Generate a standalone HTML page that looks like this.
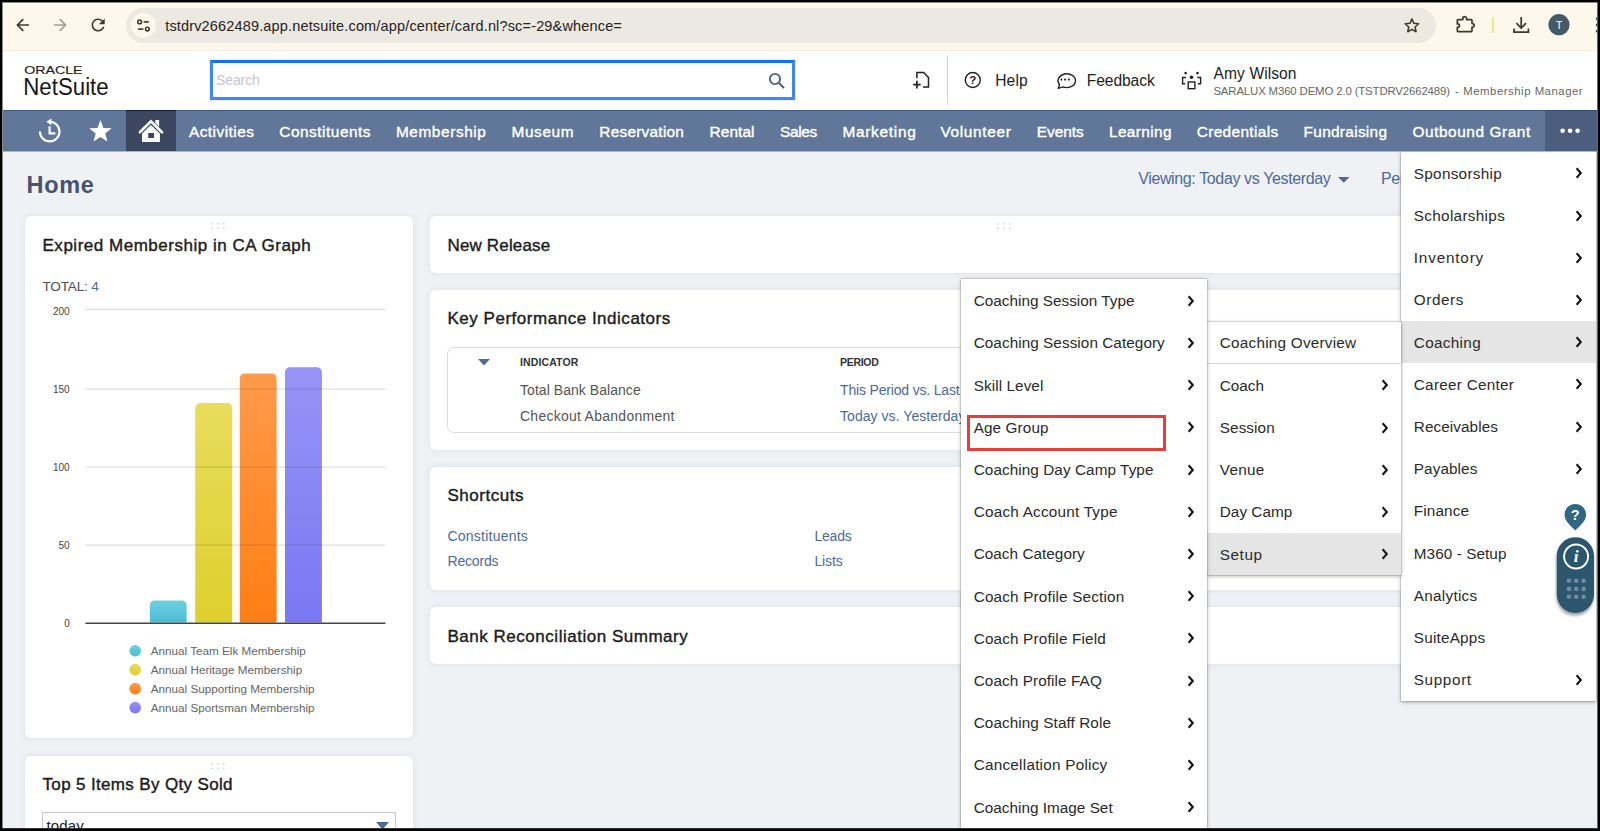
<!DOCTYPE html>
<html lang="en">
<head>
<meta charset="utf-8">
<title>Home - NetSuite</title>
<style>
*{box-sizing:border-box;margin:0;padding:0}
html,body{width:1600px;height:831px;overflow:hidden;background:#000}
#frame{position:absolute;left:2px;top:2px;width:1596px;height:827px;background:#8d8b86;border-bottom:1px solid #333;border-right:1px solid #666}
body{font-family:"Liberation Sans",sans-serif;color:#222;position:relative}
#win{position:absolute;left:3px;top:3px;width:1594px;height:825px;background:#eff1f5;overflow:hidden}
.abs{position:absolute}
.t{position:absolute;white-space:nowrap;line-height:20px}
/* browser chrome */
#chrome{position:absolute;left:0;top:0;width:1594px;height:48px;background:#fdf8ec;border-bottom:1px solid #f2eee3}
#pill{position:absolute;left:123.200px;top:4.600px;width:1310px;height:35px;border-radius:17.500px;background:#ece9e2}
#tune{position:absolute;left:4.600px;top:5px;width:25px;height:25px;border-radius:12.500px;background:#fdf8ec}
#url{left:162.2px;top:12.5px;font-size:14.5px;color:#26221b;letter-spacing:0.16px}
/* header */
#hdr{position:absolute;left:0;top:48px;width:1594px;height:59px;background:#fff}
#search{position:absolute;left:206.500px;top:9px;width:585.600px;height:40px;border:3px solid #3f87f7;border-top-color:#1271fc;box-shadow:0 0 1px 0 rgba(63,135,247,0.600);background:#fff}
/* nav */
#nav{position:absolute;left:0;top:107px;width:1594px;height:42px;border-bottom:1px solid #aab6c9;box-shadow:inset 0 1px 0 #3f5b88;background:#607799}
#homebtn{position:absolute;left:123px;top:0;width:50px;height:41px;background:#3a475e;border-top:1px solid #141a3a}
#morebtn{position:absolute;left:1542px;top:0;width:52px;height:41px;background:#4c5e7e;border-top:1px solid #2f4a75}
.nv{position:absolute;top:11px;line-height:22px;font-size:15.4px;font-weight:normal;-webkit-text-stroke:0.4px #fff;color:#fff;white-space:nowrap;letter-spacing:0.5px}
/* cards */
.card{position:absolute;background:#fff;border-radius:6px;box-shadow:0 0 7px rgba(40,50,70,0.090)}
.ct{position:absolute;white-space:nowrap;font-size:17px;font-weight:normal;-webkit-text-stroke:0.4px #1c1c1c;color:#1c1c1c;line-height:22px;letter-spacing:0.52px}
.lnk{color:#4b6a9e}
/* menus */
.menu{position:absolute;background:#fff;box-shadow:0 0 0 0.600px rgba(0,0,0,0.160),0 1px 4px rgba(0,0,0,0.330)}
.mi{position:absolute;left:0;width:100%;height:42px}
.mi span{position:absolute;left:12.500px;top:10.800px;line-height:22px;font-size:15.3px;color:#2a2a2a;white-space:nowrap;letter-spacing:0.1px}
.mi svg{position:absolute;right:12.400px;top:15.400px}
.hl{background:#e5e5e5}
</style>
</head>
<body>
<div id="frame"></div>
<div id="win">

<!-- page content placeholder -->
<div id="page">
  <div class="t" style="left:23.600px;top:168px;font-size:23.5px;line-height:28px;font-weight:bold;color:#44546f;letter-spacing:0.65px">Home</div>
  <div class="t lnk" style="left:1135.200px;top:164.600px;font-size:16px;line-height:22px;letter-spacing:-0.370px">Viewing: Today vs Yesterday</div>
  <svg class="abs" style="left:1335.200px;top:173.500px" width="12" height="6" viewBox="0 0 12 6"><path d="M0 0h11.600L5.800 5.800z" fill="#4b6a9e"/></svg>
  <div class="t lnk" style="left:1378px;top:164.600px;font-size:16px;line-height:22px;letter-spacing:-0.370px">Personalize</div>

  <!-- left column card 1 -->
  <div class="card" style="left:22px;top:213px;width:388px;height:522px">
    <svg class="abs" style="left:186px;top:7px" width="16" height="7" viewBox="0 0 16 7" fill="#d3d6db"><rect x="0" y="0" width="1.6" height="1.6"/><rect x="6" y="0" width="1.6" height="1.6"/><rect x="12" y="0" width="1.6" height="1.6"/><rect x="0" y="4.5" width="1.6" height="1.6"/><rect x="6" y="4.5" width="1.6" height="1.6"/><rect x="12" y="4.5" width="1.6" height="1.6"/></svg>
    <div class="ct" style="left:17.5px;top:18.600px">Expired Membership in CA Graph</div>
    <div class="t" style="left:17.5px;top:60.500px;font-size:13.600px;color:#505050;letter-spacing:-0.2px">TOTAL: <span class="lnk">4</span></div>
    <svg class="abs" style="left:0;top:0" width="388" height="522" viewBox="0 0 388 522" font-family="Liberation Sans, sans-serif">
      <defs>
        <linearGradient id="g1" x1="0" y1="0" x2="0" y2="1"><stop offset="0" stop-color="#6fd0e0"/><stop offset="1" stop-color="#49bdd4"/></linearGradient>
        <linearGradient id="g2" x1="0" y1="0" x2="0" y2="1"><stop offset="0" stop-color="#e8dc5c"/><stop offset="1" stop-color="#ddd02d"/></linearGradient>
        <linearGradient id="g3" x1="0" y1="0" x2="0" y2="1"><stop offset="0" stop-color="#ff9a4a"/><stop offset="1" stop-color="#fd7e14"/></linearGradient>
        <linearGradient id="g4" x1="0" y1="0" x2="0" y2="1"><stop offset="0" stop-color="#9694f6"/><stop offset="1" stop-color="#7a77f3"/></linearGradient>
      </defs>
      <g fill="#444" font-size="10" text-anchor="end">
        <text x="44.700" y="99">200</text><text x="44.700" y="177">150</text><text x="44.700" y="255">100</text><text x="44.700" y="333">50</text><text x="44.700" y="410.900">0</text>
      </g>
      <path d="M124.800 406.600V389.400a5 5 0 0 1 5-5h26.800a5 5 0 0 1 5 5V406.600z" fill="url(#g1)"/>
      <path d="M170.200 406.600V192.100a5 5 0 0 1 5-5h27a5 5 0 0 1 5 5V406.600z" fill="url(#g2)"/>
      <path d="M214.800 406.600V162.400a5 5 0 0 1 5-5h26.800a5 5 0 0 1 5 5V406.600z" fill="url(#g3)"/>
      <path d="M260 406.600V156.250a5 5 0 0 1 5-5h26.900a5 5 0 0 1 5 5V406.600z" fill="url(#g4)"/>
      <g stroke="rgba(40,60,40,0.160)" stroke-width="1.300">
        <path d="M60.400 93.400H360.400M60.400 173.150H360.400M60.400 251.200H360.400M60.400 329.200H360.400"/>
      </g>
      <path d="M60.400 407.250H360.400" stroke="#444" stroke-width="1.500"/>
      <circle cx="110.200" cy="434.750" r="5.800" fill="url(#g1)"/><circle cx="110.200" cy="453.600" r="5.800" fill="url(#g2)"/><circle cx="110.200" cy="472.600" r="5.800" fill="url(#g3)"/><circle cx="110.200" cy="491.600" r="5.800" fill="url(#g4)"/>
      <g fill="#666" font-size="11.700">
        <text x="125.800" y="439" >Annual Team Elk Membership</text><text x="125.800" y="458">Annual Heritage Membership</text><text x="125.800" y="476.800">Annual Supporting Membership</text><text x="125.800" y="495.800">Annual Sportsman Membership</text>
      </g>
    </svg>
  </div>

  <!-- left column card 2 -->
  <div class="card" style="left:22px;top:753px;width:388px;height:120px">
    <svg class="abs" style="left:186px;top:7px" width="16" height="7" viewBox="0 0 16 7" fill="#d3d6db"><rect x="0" y="0" width="1.6" height="1.6"/><rect x="6" y="0" width="1.6" height="1.6"/><rect x="12" y="0" width="1.6" height="1.6"/><rect x="0" y="4.5" width="1.6" height="1.6"/><rect x="6" y="4.5" width="1.6" height="1.6"/><rect x="12" y="4.5" width="1.6" height="1.6"/></svg>
    <div class="ct" style="left:17.5px;top:17.600px;letter-spacing:0.350px">Top 5 Items By Qty Sold</div>
    <div class="abs" style="left:17px;top:56px;width:354.400px;height:30px;border:1px solid #c9c9c9;background:#fff"></div>
    <div class="t" style="left:21.600px;top:59.600px;font-size:15px;color:#222;letter-spacing:0.100px">today</div>
    <svg class="abs" style="left:351.200px;top:66px" width="13" height="8" viewBox="0 0 13 8"><path d="M0 0h13L6.500 7.600z" fill="#4b6a9e"/></svg>
  </div>

  <!-- middle column -->
  <div class="card" style="left:427px;top:213px;width:1150px;height:57px">
    <svg class="abs" style="left:567px;top:7px" width="16" height="7" viewBox="0 0 16 7" fill="#d3d6db"><rect x="0" y="0" width="1.6" height="1.6"/><rect x="6" y="0" width="1.6" height="1.6"/><rect x="12" y="0" width="1.6" height="1.6"/><rect x="0" y="4.5" width="1.6" height="1.6"/><rect x="6" y="4.5" width="1.6" height="1.6"/><rect x="12" y="4.5" width="1.6" height="1.6"/></svg>
    <div class="ct" style="left:17.5px;top:18.600px;letter-spacing:0.160px">New Release</div>
  </div>
  <div class="card" style="left:427px;top:287px;width:1150px;height:160px">
    <div class="ct" style="left:17.5px;top:17.600px">Key Performance Indicators</div>
    <div class="abs" style="left:17px;top:56.500px;width:1116px;height:86.500px;border:1px solid #dcdcdc;border-radius:7px"></div>
    <svg class="abs" style="left:48px;top:69px" width="12" height="7" viewBox="0 0 12 7"><path d="M0 0h12L6 6.6z" fill="#4b6a9e"/></svg>
    <div class="t" style="left:90px;top:62px;font-size:10.5px;font-weight:bold;color:#333;letter-spacing:0.11px">INDICATOR</div>
    <div class="t" style="left:410px;top:62px;font-size:10.5px;font-weight:bold;color:#333;letter-spacing:-0.3px">PERIOD</div>
    <div class="t" style="left:90px;top:90.300px;font-size:14px;color:#555;letter-spacing:0.05px">Total Bank Balance</div>
    <div class="t" style="left:90px;top:116.400px;font-size:14px;color:#555;letter-spacing:0.26px">Checkout Abandonment</div>
    <div class="t lnk" style="left:410px;top:90.300px;font-size:14px;letter-spacing:-0.17px">This Period vs. Last Period</div>
    <div class="t lnk" style="left:410px;top:116.400px;font-size:14px;letter-spacing:0.05px">Today vs. Yesterday</div>
  </div>
  <div class="card" style="left:427px;top:464px;width:1150px;height:123px">
    <div class="ct" style="left:17.5px;top:17.600px">Shortcuts</div>
    <div class="t lnk" style="left:17.5px;top:58.500px;font-size:14px;letter-spacing:0.23px">Constituents</div>
    <div class="t lnk" style="left:17.5px;top:84.300px;font-size:14px;letter-spacing:-0.19px">Records</div>
    <div class="t lnk" style="left:384.4px;top:58.500px;font-size:14px;letter-spacing:-0.2px">Leads</div>
    <div class="t lnk" style="left:384.4px;top:84.300px;font-size:14px;letter-spacing:-0.1px">Lists</div>
  </div>
  <div class="card" style="left:427px;top:604px;width:1150px;height:57px">
    <div class="ct" style="left:17.5px;top:18.600px">Bank Reconciliation Summary</div>
  </div>
</div>

<!-- fly-out menus -->
<div class="menu" id="m3" style="left:1398.3px;top:149px;width:194.4px;height:548.6px">
  <div class="mi" style="top:0.0px"><span style="letter-spacing:0.29px">Sponsorship</span><svg width="8" height="12" viewBox="0 0 8 12"><path d="M1.600 1.200L5.800 6L1.600 10.800" fill="none" stroke="#161616" stroke-width="2.100"/></svg></div>
  <div class="mi" style="top:42.2px"><span style="letter-spacing:0.31px">Scholarships</span><svg width="8" height="12" viewBox="0 0 8 12"><path d="M1.600 1.200L5.800 6L1.600 10.800" fill="none" stroke="#161616" stroke-width="2.100"/></svg></div>
  <div class="mi" style="top:84.4px"><span style="letter-spacing:0.81px">Inventory</span><svg width="8" height="12" viewBox="0 0 8 12"><path d="M1.600 1.200L5.800 6L1.600 10.800" fill="none" stroke="#161616" stroke-width="2.100"/></svg></div>
  <div class="mi" style="top:126.6px"><span style="letter-spacing:0.57px">Orders</span><svg width="8" height="12" viewBox="0 0 8 12"><path d="M1.600 1.200L5.800 6L1.600 10.800" fill="none" stroke="#161616" stroke-width="2.100"/></svg></div>
  <div class="mi hl" style="top:168.8px"><span style="letter-spacing:0.32px">Coaching</span><svg width="8" height="12" viewBox="0 0 8 12"><path d="M1.600 1.200L5.800 6L1.600 10.800" fill="none" stroke="#161616" stroke-width="2.100"/></svg></div>
  <div class="mi" style="top:211.0px"><span style="letter-spacing:0.27px">Career Center</span><svg width="8" height="12" viewBox="0 0 8 12"><path d="M1.600 1.200L5.800 6L1.600 10.800" fill="none" stroke="#161616" stroke-width="2.100"/></svg></div>
  <div class="mi" style="top:253.2px"><span style="letter-spacing:0.08px">Receivables</span><svg width="8" height="12" viewBox="0 0 8 12"><path d="M1.600 1.200L5.800 6L1.600 10.800" fill="none" stroke="#161616" stroke-width="2.100"/></svg></div>
  <div class="mi" style="top:295.4px"><span style="letter-spacing:0.08px">Payables</span><svg width="8" height="12" viewBox="0 0 8 12"><path d="M1.600 1.200L5.800 6L1.600 10.800" fill="none" stroke="#161616" stroke-width="2.100"/></svg></div>
  <div class="mi" style="top:337.6px"><span style="letter-spacing:0.14px">Finance</span></div>
  <div class="mi" style="top:379.8px"><span style="letter-spacing:0.07px">M360 - Setup</span></div>
  <div class="mi" style="top:422.0px"><span style="letter-spacing:0.27px">Analytics</span></div>
  <div class="mi" style="top:464.2px"><span style="letter-spacing:0.2px">SuiteApps</span></div>
  <div class="mi" style="top:506.4px"><span style="letter-spacing:0.62px">Support</span><svg width="8" height="12" viewBox="0 0 8 12"><path d="M1.600 1.200L5.800 6L1.600 10.800" fill="none" stroke="#161616" stroke-width="2.100"/></svg></div>
</div>
<div class="menu" id="m2" style="left:1204.300px;top:318.800px;width:194px;height:253.2px">
  <div class="mi" style="top:0.0px;border-bottom:1px solid #d6d6d6"><span style="top:9.800px;letter-spacing:0.23px">Coaching Overview</span></div>
  <div class="mi" style="top:42.2px"><span style="letter-spacing:-0.01px">Coach</span><svg width="8" height="12" viewBox="0 0 8 12"><path d="M1.600 1.200L5.800 6L1.600 10.800" fill="none" stroke="#161616" stroke-width="2.100"/></svg></div>
  <div class="mi" style="top:84.4px"><span style="letter-spacing:0.07px">Session</span><svg width="8" height="12" viewBox="0 0 8 12"><path d="M1.600 1.200L5.800 6L1.600 10.800" fill="none" stroke="#161616" stroke-width="2.100"/></svg></div>
  <div class="mi" style="top:126.6px"><span style="letter-spacing:0.29px">Venue</span><svg width="8" height="12" viewBox="0 0 8 12"><path d="M1.600 1.200L5.800 6L1.600 10.800" fill="none" stroke="#161616" stroke-width="2.100"/></svg></div>
  <div class="mi" style="top:168.8px"><span style="letter-spacing:0.03px">Day Camp</span><svg width="8" height="12" viewBox="0 0 8 12"><path d="M1.600 1.200L5.800 6L1.600 10.800" fill="none" stroke="#161616" stroke-width="2.100"/></svg></div>
  <div class="mi hl" style="top:211.0px"><span style="letter-spacing:0.55px">Setup</span><svg width="8" height="12" viewBox="0 0 8 12"><path d="M1.600 1.200L5.800 6L1.600 10.800" fill="none" stroke="#161616" stroke-width="2.100"/></svg></div>
</div>
<div class="menu" id="m1" style="left:958.2px;top:276.4px;width:246.1px;height:590.8px">
  <div class="mi" style="top:0.0px"><span style="letter-spacing:0.02px">Coaching Session Type</span><svg width="8" height="12" viewBox="0 0 8 12"><path d="M1.600 1.200L5.800 6L1.600 10.800" fill="none" stroke="#161616" stroke-width="2.100"/></svg></div>
  <div class="mi" style="top:42.2px"><span style="letter-spacing:0.06px">Coaching Session Category</span><svg width="8" height="12" viewBox="0 0 8 12"><path d="M1.600 1.200L5.800 6L1.600 10.800" fill="none" stroke="#161616" stroke-width="2.100"/></svg></div>
  <div class="mi" style="top:84.4px"><span style="letter-spacing:0.08px">Skill Level</span><svg width="8" height="12" viewBox="0 0 8 12"><path d="M1.600 1.200L5.800 6L1.600 10.800" fill="none" stroke="#161616" stroke-width="2.100"/></svg></div>
  <div class="mi" style="top:126.6px"><span style="letter-spacing:0.11px">Age Group</span><svg width="8" height="12" viewBox="0 0 8 12"><path d="M1.600 1.200L5.800 6L1.600 10.800" fill="none" stroke="#161616" stroke-width="2.100"/></svg></div>
  <div class="mi" style="top:168.8px"><span style="letter-spacing:0.07px">Coaching Day Camp Type</span><svg width="8" height="12" viewBox="0 0 8 12"><path d="M1.600 1.200L5.800 6L1.600 10.800" fill="none" stroke="#161616" stroke-width="2.100"/></svg></div>
  <div class="mi" style="top:211.0px"><span style="letter-spacing:0.22px">Coach Account Type</span><svg width="8" height="12" viewBox="0 0 8 12"><path d="M1.600 1.200L5.800 6L1.600 10.800" fill="none" stroke="#161616" stroke-width="2.100"/></svg></div>
  <div class="mi" style="top:253.2px"><span style="letter-spacing:0.04px">Coach Category</span><svg width="8" height="12" viewBox="0 0 8 12"><path d="M1.600 1.200L5.800 6L1.600 10.800" fill="none" stroke="#161616" stroke-width="2.100"/></svg></div>
  <div class="mi" style="top:295.4px"><span style="letter-spacing:0.17px">Coach Profile Section</span><svg width="8" height="12" viewBox="0 0 8 12"><path d="M1.600 1.200L5.800 6L1.600 10.800" fill="none" stroke="#161616" stroke-width="2.100"/></svg></div>
  <div class="mi" style="top:337.6px"><span style="letter-spacing:0.16px">Coach Profile Field</span><svg width="8" height="12" viewBox="0 0 8 12"><path d="M1.600 1.200L5.800 6L1.600 10.800" fill="none" stroke="#161616" stroke-width="2.100"/></svg></div>
  <div class="mi" style="top:379.8px"><span style="letter-spacing:0.09px">Coach Profile FAQ</span><svg width="8" height="12" viewBox="0 0 8 12"><path d="M1.600 1.200L5.800 6L1.600 10.800" fill="none" stroke="#161616" stroke-width="2.100"/></svg></div>
  <div class="mi" style="top:422.0px"><span style="letter-spacing:0.08px">Coaching Staff Role</span><svg width="8" height="12" viewBox="0 0 8 12"><path d="M1.600 1.200L5.800 6L1.600 10.800" fill="none" stroke="#161616" stroke-width="2.100"/></svg></div>
  <div class="mi" style="top:464.2px"><span style="letter-spacing:0.24px">Cancellation Policy</span><svg width="8" height="12" viewBox="0 0 8 12"><path d="M1.600 1.200L5.800 6L1.600 10.800" fill="none" stroke="#161616" stroke-width="2.100"/></svg></div>
  <div class="mi" style="top:506.4px"><span style="letter-spacing:0.02px">Coaching Image Set</span><svg width="8" height="12" viewBox="0 0 8 12"><path d="M1.600 1.200L5.800 6L1.600 10.800" fill="none" stroke="#161616" stroke-width="2.100"/></svg></div>
  <div class="mi" style="top:548.6px"><span>Coaching Waiver</span><svg width="8" height="12" viewBox="0 0 8 12"><path d="M1.600 1.200L5.800 6L1.600 10.800" fill="none" stroke="#161616" stroke-width="2.100"/></svg></div>
</div>
<div class="abs" id="redbox" style="left:964.200px;top:412.200px;width:199.200px;height:35.800px;border:3px solid #e73e35"></div>

<div id="chrome">
  <div id="pill"><div id="tune"></div></div>
  <div class="t" id="url">tstdrv2662489.app.netsuite.com/app/center/card.nl?sc=-29&amp;whence=</div>
</div>

<div id="hdr">
  <div id="search"></div>
</div>

<div id="nav">
  <div id="homebtn"></div>
  <div id="morebtn"></div>
  <div class="nv" style="left:185.9px;letter-spacing:0.49px">Activities</div>
  <div class="nv" style="left:276.3px;letter-spacing:0.52px">Constituents</div>
  <div class="nv" style="left:392.9px;letter-spacing:0.59px">Membership</div>
  <div class="nv" style="left:508.5px;letter-spacing:0.62px">Museum</div>
  <div class="nv" style="left:596.3px;letter-spacing:0.25px">Reservation</div>
  <div class="nv" style="left:706.6px;letter-spacing:0.08px">Rental</div>
  <div class="nv" style="left:777.1px;letter-spacing:-0.38px">Sales</div>
  <div class="nv" style="left:839.4px;letter-spacing:0.73px">Marketing</div>
  <div class="nv" style="left:937.4px;letter-spacing:0.67px">Volunteer</div>
  <div class="nv" style="left:1033.8px;letter-spacing:-0.03px">Events</div>
  <div class="nv" style="left:1106.0px;letter-spacing:0.37px">Learning</div>
  <div class="nv" style="left:1193.7px;letter-spacing:0.36px">Credentials</div>
  <div class="nv" style="left:1300.6px;letter-spacing:0.3px">Fundraising</div>
  <div class="nv" style="left:1409.5px;letter-spacing:0.56px">Outbound Grant</div>
</div>

<div id="abs0" class="abs" style="left:-3px;top:-3px;width:1600px;height:831px;pointer-events:none">
<svg class="abs" style="left:0;top:0" width="1600" height="52" viewBox="0 0 1600 52" fill="none" stroke-linecap="butt" stroke-linejoin="miter">
  <!-- back -->
  <path d="M29 25H17.6M23.3 19.2L17.5 25L23.3 30.8" stroke="#3d3a28" stroke-width="1.7"/>
  <!-- forward -->
  <path d="M54 25H65.4M59.7 19.2L65.5 25L59.7 30.8" stroke="#a3a196" stroke-width="1.7"/>
  <!-- reload -->
  <path transform="translate(88.300 15.200) scale(0.820)" d="M17.65 6.35C16.2 4.9 14.21 4 12 4c-4.420 0-7.990 3.580-7.990 8s3.570 8 7.990 8c3.730 0 6.840-2.550 7.730-6h-2.080c-.820 2.330-3.040 4-5.650 4-3.310 0-6-2.690-6-6s2.690-6 6-6c1.660 0 3.140.690 4.220 1.780L13 11h7V4l-2.350 2.350z" fill="#3d3a28" stroke="none"/>
  <!-- tune -->
  <circle cx="139.6" cy="21.9" r="1.9" stroke="#3d3a28" stroke-width="1.5"/>
  <path d="M143.6 21.9H148.9" stroke="#3d3a28" stroke-width="1.6"/>
  <circle cx="147.4" cy="29.1" r="1.9" stroke="#3d3a28" stroke-width="1.5"/>
  <path d="M138 29.1H143.4" stroke="#3d3a28" stroke-width="1.6"/>
  <!-- star -->
  <path d="M1411.90 18.90L1413.84 23.33L1418.65 23.81L1415.04 27.02L1416.07 31.74L1411.90 29.30L1407.73 31.74L1408.76 27.02L1405.15 23.81L1409.96 23.33z" stroke="#3d3a28" stroke-width="1.500" stroke-linejoin="round"/>
  <!-- puzzle -->
  <path d="M1458.100 19.600h4.700v-1a1.900 1.900 0 0 1 3.800 0v1h4.600a.800.800 0 0 1 .8.800v3.200h.400a1.800 1.800 0 0 1 0 3.600h-.400v3.600a.800.800 0 0 1-.8.800h-13.100a.800.800 0 0 1-.8-.8v-3.500h.500a1.700 1.700 0 0 0 0-3.400h-.500v-3.500a.800.800 0 0 1 .8-.8z" stroke="#3d3a28" stroke-width="1.700" stroke-linejoin="round"/>
  <!-- divider -->
  <rect x="1491.8" y="17.5" width="2" height="15.3" fill="#f1e37e" stroke="none"/>
  <!-- download -->
  <path d="M1521.2 17V27.6M1516.4 23.2L1521.2 28L1526 23.2" stroke="#3d3a28" stroke-width="1.7"/>
  <path d="M1514 28.6V32.2H1528.4V28.6" stroke="#3d3a28" stroke-width="1.7"/>
  <!-- avatar -->
  <circle cx="1559" cy="24.7" r="10.6" fill="#465a66" stroke="none"/>
  <text x="1559" y="28.6" font-family="Liberation Sans, sans-serif" font-size="11" fill="#fff" stroke="none" text-anchor="middle">T</text>
  <!-- kebab (clipped) -->
  <circle cx="1597.4" cy="18.8" r="1.6" fill="#3d3a28" stroke="none"/><circle cx="1597.4" cy="25" r="1.6" fill="#3d3a28" stroke="none"/><circle cx="1597.4" cy="31.2" r="1.6" fill="#3d3a28" stroke="none"/>
</svg>

<!-- header -->
<svg class="abs" style="left:0;top:50px" width="1600" height="60" viewBox="0 50 1600 60" fill="none">
  <!-- oracle netsuite logo text -->
  <text x="24.200" y="73.700" font-family="Liberation Sans, sans-serif" font-size="10" fill="#1e1e1e" stroke="#1e1e1e" stroke-width="0.150" textLength="58.400" lengthAdjust="spacingAndGlyphs">ORACLE</text>
  <text x="23.2" y="94.6" font-family="Liberation Sans, sans-serif" font-size="23.5" fill="#161616" textLength="85.5" lengthAdjust="spacingAndGlyphs">NetSuite</text>
  <!-- search glass -->
  <circle cx="775" cy="79" r="5.100" stroke="#4a5f85" stroke-width="1.900"/>
  <path d="M778.700 82.700L784 88" stroke="#4a5f85" stroke-width="2.100"/>
  <!-- new page -->
  <path d="M916.9 78.2V72.6H923.6L928.5 77.6V86.9H923" stroke="#222" stroke-width="1.5"/>
  <path d="M913.1 84.6H920.7M916.9 80.8V88.4" stroke="#222" stroke-width="1.7"/>
  <!-- divider -->
  <path d="M947.5 55V105" stroke="#d6d6d6" stroke-width="1"/>
  <!-- help -->
  <circle cx="972.75" cy="80" r="7.5" stroke="#222" stroke-width="1.4"/>
  <text x="972.75" y="84.3" font-family="Liberation Sans, sans-serif" font-size="11.5" font-weight="bold" fill="#222" text-anchor="middle">?</text>
  <!-- feedback -->
  <path d="M1058.300 88.300l1.300-3.700a8.700 6.900 0 1 1 3.400 2.300z" stroke="#222" stroke-width="1.400" stroke-linejoin="round"/>
  <circle cx="1061.400" cy="79.600" r="1.050" fill="#222"/><circle cx="1065.100" cy="79.600" r="1.050" fill="#222"/><circle cx="1068.800" cy="79.600" r="1.050" fill="#222"/>
  <!-- role -->
  <circle cx="1191.5" cy="77.2" r="1.8" fill="#222"/>
  <rect x="1188.2" y="82" width="6.7" height="6.7" stroke="#222" stroke-width="1.4"/>
  <circle cx="1185.6" cy="73.1" r="1.3" fill="#222"/><circle cx="1197.5" cy="73.1" r="1.3" fill="#222"/>
  <path d="M1186 77.5H1182.6V83.8H1185.2M1197.2 77.5H1200.6V83.8H1198" stroke="#222" stroke-width="1.4"/>
</svg>
<div class="t" style="left:216px;top:70px;font-size:14px;color:#c3c6cc;letter-spacing:-0.100px">Search</div>
<div class="t" style="left:995.200px;top:71px;font-size:15.600px;color:#222;letter-spacing:0.150px">Help</div>
<div class="t" style="left:1086.800px;top:71px;font-size:15.600px;color:#222;letter-spacing:-0.080px">Feedback</div>
<div class="t" style="left:1213.600px;top:63.600px;font-size:15.600px;color:#222;letter-spacing:0.070px">Amy Wilson</div>
<div class="t" style="left:1213.400px;top:81px;font-size:11.400px;color:#666;letter-spacing:-0.140px">SARALUX M360 DEMO 2.0 (TSTDRV2662489)</div>
<div class="t" style="left:1455px;top:81px;font-size:11.400px;color:#666">-</div>
<div class="t" style="left:1463.300px;top:81px;font-size:11.400px;color:#666;letter-spacing:0.500px">Membership Manager</div>

<!-- nav icons -->
<svg class="abs" style="left:0;top:110px" width="200" height="42" viewBox="0 110 200 42" fill="none">
  <path d="M49.700 121.800A9.800 9.800 0 1 1 39.900 131.600" stroke="#fff" stroke-width="2.100"/>
  <path d="M46.300 121.800L51.400 118.400V125.200z" fill="#fff"/>
  <path d="M49.600 126.300V133.400H55.300" stroke="#fff" stroke-width="2.100"/>
  <path d="M100.45 120.10L103.37 127.91L111.70 128.27L105.18 133.46L107.40 141.50L100.45 136.90L93.50 141.50L95.72 133.46L89.20 128.27L97.53 127.91z" fill="#fff"/>
  <path d="M139.800 132.200L150.900 121.400L162 132.200" stroke="#fff" stroke-width="2.700" stroke-linecap="round" stroke-linejoin="miter"/>
  <path d="M155.300 119.900H159.100V126.800L155.300 123.100z" fill="#fff"/>
  <path d="M142 133.500L150.900 124.900L159.900 133.500V141.900H142z M148.200 133.100V138.100H154V133.100z" fill="#fff" fill-rule="evenodd"/>
</svg>
<!-- more dots -->
<svg class="abs" style="left:1558px;top:126px" width="24" height="9" viewBox="0 0 24 9"><circle cx="4.600" cy="4.800" r="2.300" fill="#fff"/><circle cx="12.100" cy="4.800" r="2.300" fill="#fff"/><circle cx="19.600" cy="4.800" r="2.300" fill="#fff"/></svg>

<!-- floating help widgets -->
<svg class="abs" style="left:1540px;top:498px" width="60" height="130" viewBox="1540 498 60 130" fill="none">
  <defs><filter id="ps" x="-30%" y="-10%" width="160%" height="130%"><feGaussianBlur stdDeviation="1.600"/></filter></defs>
  <path d="M1575.300 530.600c-3.300-4.200-10.800-8.800-10.800-15.900a10.800 10.800 0 0 1 21.600 0c0 7.100-7.500 11.700-10.800 15.900z" fill="#2f6681"/>
  <text x="1575.300" y="520.400" font-family="Liberation Sans, sans-serif" font-size="14.500" font-weight="bold" fill="#fff" text-anchor="middle">?</text>
  <rect x="1556.300" y="540" width="37.200" height="75.600" rx="18.600" fill="rgba(0,0,0,0.380)" filter="url(#ps)"/>
  <rect x="1556.800" y="537.200" width="37.200" height="75.800" rx="18.600" fill="#2b566d"/>
  <circle cx="1576.100" cy="556.500" r="12" stroke="#fff" stroke-width="1.900"/>
  <text x="1576.300" y="562.400" font-family="Liberation Serif, serif" font-size="17.500" font-weight="bold" font-style="italic" fill="#fff" text-anchor="middle">i</text>
  <g fill="#6f8d9d"><circle cx="1569" cy="580.800" r="2.300"/><circle cx="1576.300" cy="580.800" r="2.300"/><circle cx="1583.600" cy="580.800" r="2.300"/><circle cx="1569" cy="588.900" r="2.300"/><circle cx="1576.300" cy="588.900" r="2.300"/><circle cx="1583.600" cy="588.900" r="2.300"/><circle cx="1569" cy="596.800" r="2.300"/><circle cx="1576.300" cy="596.800" r="2.300"/><circle cx="1583.600" cy="596.800" r="2.300"/></g>
</svg>
</div>

</div>
</body>
</html>
